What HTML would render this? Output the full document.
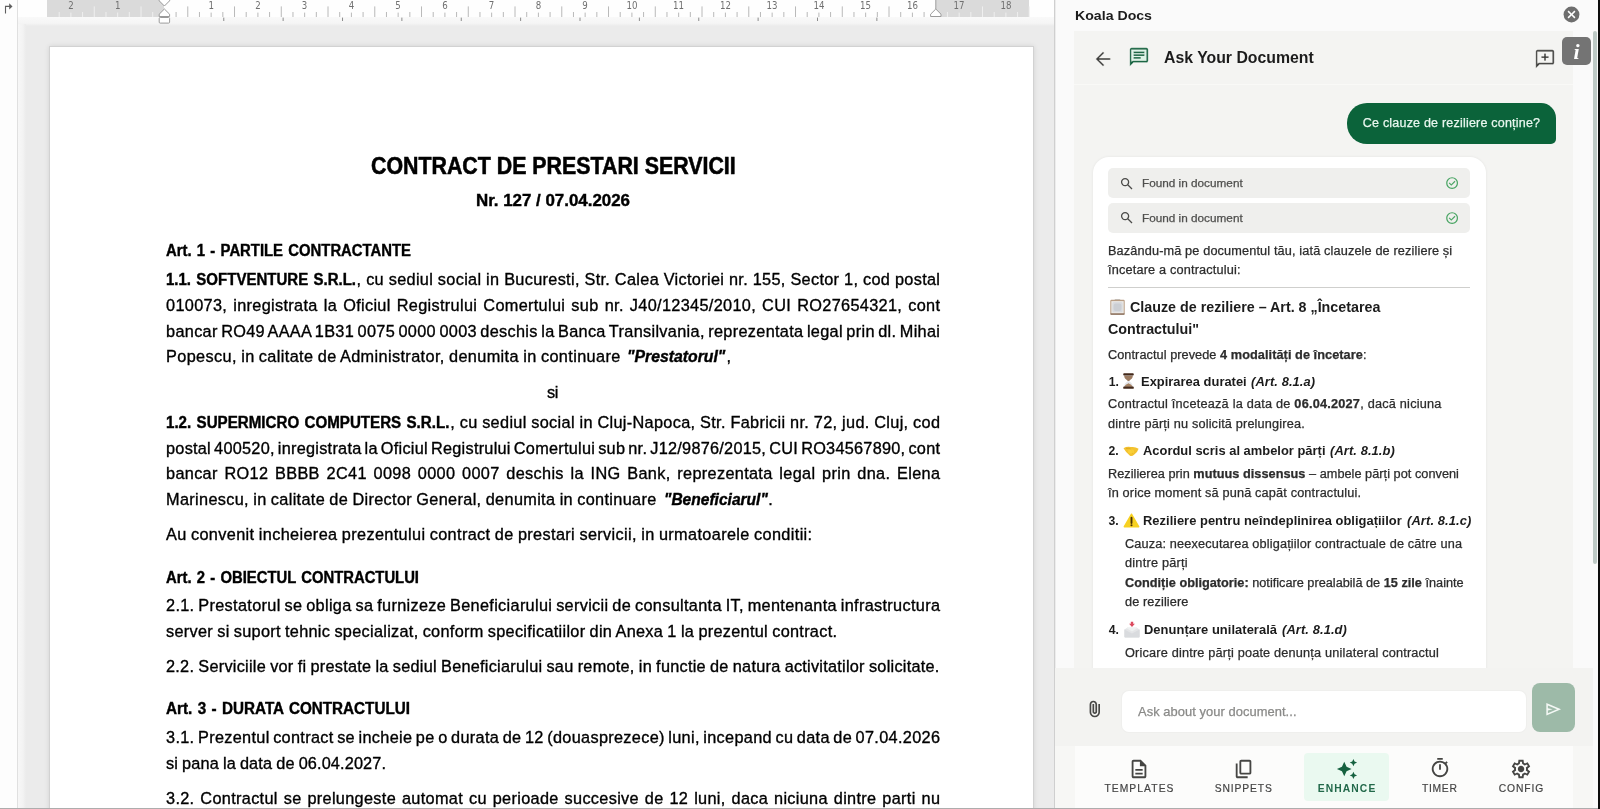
<!DOCTYPE html>
<html lang="ro"><head><meta charset="utf-8"><title>Koala Docs</title>
<style>
html,body{margin:0;padding:0}
body{width:1600px;height:809px;overflow:hidden;position:relative;background:#ebebeb;font-family:"Liberation Sans",Arial,Helvetica,sans-serif;color:#000}
.a{position:absolute}
.t{position:absolute;white-space:nowrap;color:#000}
#root{position:absolute;left:0;top:0;width:1600px;height:809px;will-change:transform}
svg{display:block;position:absolute}
b{font-weight:700}
</style></head><body><div id="root">
<!-- document area -->
<div class="a" style="left:0;top:0;width:1055px;height:809px;background:#ebebeb"></div>
<div class="a" style="left:18px;top:17px;width:1036px;height:9px;background:linear-gradient(#f9f9f9,#f5f5f5 70%,#ebebeb)"></div>
<div class="a" style="left:18px;top:24px;width:8px;height:785px;background:linear-gradient(90deg,#f7f7f7,#f3f3f3 60%,#ebebeb)"></div>
<div class="a" style="left:49.2px;top:46px;width:984.9px;height:780px;background:#fff;border:1px solid #d2d2d2;box-sizing:border-box;box-shadow:0 0 5px rgba(0,0,0,.10)"></div>
<div class="a" style="left:0;top:0;width:17px;height:809px;background:#fdfdfd;border-right:1px solid #e0e0e0"></div>
<div class="a" style="left:18px;top:0;width:1036px;height:17px;background:#fefefe"></div>
<div class="a" style="left:47.3px;top:0;width:117.1px;height:17px;background:#dadada"></div>
<div class="a" style="left:935.8px;top:0;width:93.5px;height:17px;background:#dadada"></div>
<svg width="1055" height="26" viewBox="0 0 1055 26" style="left:0;top:0" font-family="DejaVu Sans Condensed, DejaVu Sans, Liberation Sans, sans-serif" font-size="9.6" fill="#707070">
<path d="M5.500 13.400V6.400h5" fill="none" stroke="#5e5e5e" stroke-width="1.1"/><path d="M9.2 3.300l3.300 3.100-3.300 3.100z" fill="#5e5e5e"/>
<path d="M176.09 12.0V17M187.78 6.4V17M199.46 12.0V17M211.15 12.6V17M222.84 12.0V17M234.53 6.4V17M246.21 12.0V17M257.90 12.6V17M269.59 12.0V17M281.27 6.4V17M292.96 12.0V17M304.65 12.6V17M316.34 12.0V17M328.02 6.4V17M339.71 12.0V17M351.40 12.6V17M363.09 12.0V17M374.77 6.4V17M386.46 12.0V17M398.15 12.6V17M409.84 12.0V17M421.52 6.4V17M433.21 12.0V17M444.90 12.6V17M456.59 12.0V17M468.27 6.4V17M479.96 12.0V17M491.65 12.6V17M503.34 12.0V17M515.02 6.4V17M526.71 12.0V17M538.40 12.6V17M550.09 12.0V17M561.77 6.4V17M573.46 12.0V17M585.15 12.6V17M596.84 12.0V17M608.52 6.4V17M620.21 12.0V17M631.90 12.6V17M643.59 12.0V17M655.27 6.4V17M666.96 12.0V17M678.65 12.6V17M690.34 12.0V17M702.02 6.4V17M713.71 12.0V17M725.40 12.6V17M737.09 12.0V17M748.77 6.4V17M760.46 12.0V17M772.15 12.6V17M783.84 12.0V17M795.52 6.4V17M807.21 12.0V17M818.90 12.6V17M830.59 12.0V17M842.27 6.4V17M853.96 12.0V17M865.65 12.6V17M877.34 12.0V17M889.02 6.4V17M900.71 12.0V17M912.40 12.6V17M924.09 12.0V17" stroke="#b9b9b9" stroke-width="1" fill="none"/>
<path d="M59.21 12.0V17M70.90 12.6V17M82.59 12.0V17M94.28 6.4V17M105.96 12.0V17M117.65 12.6V17M129.34 12.0V17M141.03 6.4V17M152.71 12.0V17M947.46 12.0V17M959.15 12.6V17M970.84 12.0V17M982.52 6.4V17M994.21 12.0V17M1005.90 12.6V17M1017.59 12.0V17M1029.28 6.4V17" stroke="#efefef" stroke-width="1" fill="none"/>
<path d="M223.77 17.6V21M283.14 17.6V21M342.52 17.6V21M401.89 17.6V21M461.26 17.6V21M520.63 17.6V21M580.01 17.6V21M639.38 17.6V21M698.75 17.6V21M758.12 17.6V21M817.50 17.6V21M876.87 17.6V21" stroke="#8c8c8c" stroke-width="1" fill="none"/>
<text x="70.9" y="9.2" text-anchor="middle">2</text><text x="117.7" y="9.2" text-anchor="middle">1</text><text x="211.2" y="9.2" text-anchor="middle">1</text><text x="257.9" y="9.2" text-anchor="middle">2</text><text x="304.6" y="9.2" text-anchor="middle">3</text><text x="351.4" y="9.2" text-anchor="middle">4</text><text x="398.1" y="9.2" text-anchor="middle">5</text><text x="444.9" y="9.2" text-anchor="middle">6</text><text x="491.6" y="9.2" text-anchor="middle">7</text><text x="538.4" y="9.2" text-anchor="middle">8</text><text x="585.1" y="9.2" text-anchor="middle">9</text><text x="631.9" y="9.2" text-anchor="middle">10</text><text x="678.6" y="9.2" text-anchor="middle">11</text><text x="725.4" y="9.2" text-anchor="middle">12</text><text x="772.1" y="9.2" text-anchor="middle">13</text><text x="818.9" y="9.2" text-anchor="middle">14</text><text x="865.6" y="9.2" text-anchor="middle">15</text><text x="912.4" y="9.2" text-anchor="middle">16</text><text x="959.1" y="9.2" text-anchor="middle">17</text><text x="1005.9" y="9.2" text-anchor="middle">18</text>
<path d="M159.2 -1.5h10.4v2.3l-5.2 5.2l-5.2 -5.2z" fill="#fff" stroke="#9a9a9a" stroke-width="1"/>
<path d="M159.2 16.5v-2.3l5.2 -5.2l5.2 5.2v2.3z" fill="#fff" stroke="#9a9a9a" stroke-width="1"/>
<rect x="159.2" y="17.5" width="10.4" height="5.6" rx="1" fill="#fff" stroke="#9a9a9a" stroke-width="1"/>
<path d="M935.8 0V9" stroke="#9a9a9a" stroke-width="1" fill="none"/>
<path d="M930.6 16.5v-2.3l5.2 -5.2l5.2 5.2v2.3z" fill="#fff" stroke="#9a9a9a" stroke-width="1"/>
</svg>
<!-- document text -->
<div class="t" style="left:371.30px;top:152.30px;font-size:23.6px;line-height:28px;font-weight:700;transform:scaleX(0.9052);transform-origin:0 50%;-webkit-text-stroke:0.55px;"><span id="d_title">CONTRACT DE PRESTARI SERVICII</span></div>
<div class="t" style="left:476.00px;top:189.80px;font-size:16.0px;line-height:22px;font-weight:700;transform:scaleX(1.0554);transform-origin:0 50%;-webkit-text-stroke:0.4px;"><span id="d_nr">Nr. 127 / 07.04.2026</span></div>
<div class="t" style="left:166.00px;top:239.80px;font-size:15.8px;line-height:22px;font-weight:700;word-spacing:1.200px;transform:scaleX(0.9406);transform-origin:0 50%;-webkit-text-stroke:0.4px;"><span id="d_a1">Art. 1 - PARTILE CONTRACTANTE</span></div>
<div class="t" style="left:166.00px;top:268.80px;font-size:15.8px;line-height:22px;font-weight:700;word-spacing:1.200px;transform:scaleX(0.9505);transform-origin:0 50%;-webkit-text-stroke:0.4px;"><span id="d_11a0">1.1. SOFTVENTURE S.R.L.</span></div>
<div class="t" style="left:356.60px;top:268.30px;font-size:16.3px;line-height:22px;letter-spacing:0.322px;word-spacing:-0.143px;-webkit-text-stroke:0.34px;"><span id="d_11a">, cu sediul social in Bucuresti, Str. Calea Victoriei nr. 155, Sector 1, cod postal</span></div>
<div class="t" style="left:166.00px;top:294.30px;font-size:16.3px;line-height:22px;letter-spacing:0.322px;word-spacing:1.261px;-webkit-text-stroke:0.34px;"><span id="d_11b">010073, inregistrata la Oficiul Registrului Comertului sub nr. J40/12345/2010, CUI RO27654321, cont</span></div>
<div class="t" style="left:166.00px;top:320.30px;font-size:16.3px;line-height:22px;letter-spacing:0.322px;word-spacing:-1.414px;-webkit-text-stroke:0.34px;"><span id="d_11c">bancar RO49 AAAA 1B31 0075 0000 0003 deschis la Banca Transilvania, reprezentata legal prin dl. Mihai</span></div>
<div class="t" style="left:166.00px;top:345.30px;font-size:16.3px;line-height:22px;letter-spacing:0.371px;word-spacing:-0.600px;-webkit-text-stroke:0.34px;"><span id="d_11d">Popescu, in calitate de Administrator, denumita in continuare</span></div>
<div class="t" style="left:627.40px;top:345.80px;font-size:15.8px;line-height:22px;font-weight:700;transform:scaleX(0.9991);transform-origin:0 50%;-webkit-text-stroke:0.4px;"><span id="d_11d1"><i>"Prestatorul"</i></span></div>
<div class="t" style="left:726.60px;top:345.30px;font-size:16.3px;line-height:22px;-webkit-text-stroke:0.34px;"><span id="d_11d2">,</span></div>
<div class="t" style="left:547.00px;top:381.30px;font-size:16.3px;line-height:22px;letter-spacing:-0.470px;-webkit-text-stroke:0.34px;"><span id="d_si">si</span></div>
<div class="t" style="left:166.00px;top:411.80px;font-size:15.8px;line-height:22px;font-weight:700;word-spacing:1.200px;transform:scaleX(0.9578);transform-origin:0 50%;-webkit-text-stroke:0.4px;"><span id="d_12a0">1.2. SUPERMICRO COMPUTERS S.R.L.</span></div>
<div class="t" style="left:450.20px;top:411.30px;font-size:16.3px;line-height:22px;letter-spacing:0.322px;word-spacing:-0.201px;-webkit-text-stroke:0.34px;"><span id="d_12a">, cu sediul social in Cluj-Napoca, Str. Fabricii nr. 72, jud. Cluj, cod</span></div>
<div class="t" style="left:166.00px;top:437.30px;font-size:16.3px;line-height:22px;letter-spacing:0.259px;word-spacing:-1.700px;-webkit-text-stroke:0.34px;"><span id="d_12b">postal 400520, inregistrata la Oficiul Registrului Comertului sub nr. J12/9876/2015, CUI RO34567890, cont</span></div>
<div class="t" style="left:166.00px;top:462.30px;font-size:16.3px;line-height:22px;letter-spacing:0.322px;word-spacing:1.916px;-webkit-text-stroke:0.34px;"><span id="d_12c">bancar RO12 BBBB 2C41 0098 0000 0007 deschis la ING Bank, reprezentata legal prin dna. Elena</span></div>
<div class="t" style="left:166.00px;top:488.30px;font-size:16.3px;line-height:22px;letter-spacing:0.335px;word-spacing:-0.600px;-webkit-text-stroke:0.34px;"><span id="d_12d">Marinescu, in calitate de Director General, denumita in continuare</span></div>
<div class="t" style="left:663.70px;top:488.80px;font-size:15.8px;line-height:22px;font-weight:700;transform:scaleX(0.9847);transform-origin:0 50%;-webkit-text-stroke:0.4px;"><span id="d_12d1"><i>"Beneficiarul"</i></span></div>
<div class="t" style="left:768.30px;top:488.30px;font-size:16.3px;line-height:22px;-webkit-text-stroke:0.34px;"><span id="d_12d2">.</span></div>
<div class="t" style="left:166.00px;top:523.30px;font-size:16.3px;line-height:22px;letter-spacing:0.362px;word-spacing:-0.600px;-webkit-text-stroke:0.34px;"><span id="d_au">Au convenit incheierea prezentului contract de prestari servicii, in urmatoarele conditii:</span></div>
<div class="t" style="left:166.00px;top:566.80px;font-size:15.8px;line-height:22px;font-weight:700;word-spacing:1.200px;transform:scaleX(0.9386);transform-origin:0 50%;-webkit-text-stroke:0.4px;"><span id="d_a2">Art. 2 - OBIECTUL CONTRACTULUI</span></div>
<div class="t" style="left:166.00px;top:594.30px;font-size:16.3px;line-height:22px;letter-spacing:0.322px;word-spacing:-0.968px;-webkit-text-stroke:0.34px;"><span id="d_21a">2.1. Prestatorul se obliga sa furnizeze Beneficiarului servicii de consultanta IT, mentenanta infrastructura</span></div>
<div class="t" style="left:166.00px;top:620.30px;font-size:16.3px;line-height:22px;letter-spacing:0.293px;word-spacing:-0.600px;-webkit-text-stroke:0.34px;"><span id="d_21b">server si suport tehnic specializat, conform specificatiilor din Anexa 1 la prezentul contract.</span></div>
<div class="t" style="left:166.00px;top:655.30px;font-size:16.3px;line-height:22px;letter-spacing:0.250px;word-spacing:-0.600px;-webkit-text-stroke:0.34px;"><span id="d_22">2.2. Serviciile vor fi prestate la sediul Beneficiarului sau remote, in functie de natura activitatilor solicitate.</span></div>
<div class="t" style="left:166.00px;top:697.80px;font-size:15.8px;line-height:22px;font-weight:700;word-spacing:1.200px;transform:scaleX(0.9650);transform-origin:0 50%;-webkit-text-stroke:0.4px;"><span id="d_a3">Art. 3 - DURATA CONTRACTULUI</span></div>
<div class="t" style="left:166.00px;top:726.30px;font-size:16.3px;line-height:22px;letter-spacing:0.322px;word-spacing:-1.333px;-webkit-text-stroke:0.34px;"><span id="d_31a">3.1. Prezentul contract se incheie pe o durata de 12 (douasprezece) luni, incepand cu data de 07.04.2026</span></div>
<div class="t" style="left:166.00px;top:752.30px;font-size:16.3px;line-height:22px;letter-spacing:0.135px;word-spacing:-0.600px;-webkit-text-stroke:0.34px;"><span id="d_31b">si pana la data de 06.04.2027.</span></div>
<div class="t" style="left:166.00px;top:787.30px;font-size:16.3px;line-height:22px;letter-spacing:0.322px;word-spacing:1.060px;-webkit-text-stroke:0.34px;"><span id="d_32">3.2. Contractul se prelungeste automat cu perioade succesive de 12 luni, daca niciuna dintre parti nu</span></div>
<!-- side panel -->
<div class="a" style="left:1054px;top:0;width:546px;height:809px;background:#fafafa;border-left:1px solid #cfcfcf;box-sizing:border-box;box-shadow:inset 1px 0 0 #ececec"></div>
<div class="a" style="left:1074px;top:30.5px;width:499px;height:640px;background:#f4f4f2"></div>
<div class="a" style="left:1074px;top:84px;width:499px;height:1px;background:#f9f9f7"></div>
<!-- header icons -->
<svg width="19" height="19" viewBox="0 -960 960 960" style="left:1562.3px;top:5.1px"><circle cx="480" cy="-480" r="400" fill="#6e6e6e"/><path d="m336-280 144-144 144 144 56-56-144-144 144-144-56-56-144 144-144-144-56 56 144 144-144 144 56 56Z" fill="#fff"/></svg>
<svg width="22" height="22" viewBox="0 -960 960 960" style="left:1092.3px;top:48.1px"><path fill="#3f3f3d" stroke="#f4f4f2" stroke-width="18" d="m313-440 224 224-57 56-320-320 320-320 57 56-224 224h487v80H313Z"/></svg>
<svg width="22" height="22" viewBox="0 -960 960 960" style="left:1127.9px;top:45.9px"><path d="M160-800h640v480H206l-46 45Z" fill="#dcf3e6"/><path fill="#105f3b" stroke="#f4f4f2" stroke-width="14" d="M240-400h320v-80H240v80Zm0-120h480v-80H240v80Zm0-120h480v-80H240v80ZM80-80v-720q0-33 23.500-56.500T160-880h640q33 0 56.500 23.500T880-800v480q0 33-23.500 56.500T800-240H240L80-80Zm126-240h594v-480H160v525l46-45Zm-46 0v-480 480Z"/></svg>
<svg width="22" height="22" viewBox="0 -960 960 960" style="left:1533.6px;top:47.9px"><path fill="#3f3f3d" stroke="#f4f4f2" stroke-width="14" d="M440-400h80v-120h120v-80H520v-120h-80v120H320v80h120v120ZM80-80v-720q0-33 23.500-56.500T160-880h640q33 0 56.500 23.500T880-800v480q0 33-23.500 56.500T800-240H240L80-80Zm126-240h594v-480H160v525l46-45Zm-46 0v-480 480Z"/></svg>
<div class="a" style="left:1561.8px;top:36.8px;width:29.1px;height:28.7px;background:#747474;border-radius:5px"></div>
<div class="t" style="left:1573.6px;top:40px;font-family:'Liberation Serif','DejaVu Serif',serif;font-style:italic;font-weight:700;font-size:22px;line-height:24px;color:#fff">i</div>
<!-- user bubble -->
<div class="a" style="left:1347.2px;top:102.5px;width:208.8px;height:41.2px;background:#0b633a;border-radius:20px 15px 5px 20px"></div>
<!-- assistant card -->
<div class="a" style="left:1092.5px;top:157px;width:393.5px;height:530px;background:#fff;border-radius:16px 16px 0 0;box-shadow:0 0 3px rgba(0,0,0,.07)"></div>
<div class="a" style="left:1108px;top:168.4px;width:362.4px;height:29.6px;background:#efefed;border-radius:5px"></div>
<div class="a" style="left:1108px;top:203.2px;width:362.4px;height:29.6px;background:#efefed;border-radius:5px"></div>
<svg width="15.4" height="15.4" viewBox="0 -960 960 960" style="left:1118.9px;top:175.6px"><path fill="#4a4a48" d="M784-120 532-372q-30 24-69 38t-83 14q-109 0-184.500-75.500T120-580q0-109 75.500-184.500T380-840q109 0 184.500 75.500T640-580q0 44-14 83t-38 69l252 252-56 56ZM380-400q75 0 127.500-52.500T560-580q0-75-52.500-127.500T380-760q-75 0-127.500 52.500T200-580q0 75 52.500 127.500T380-400Z"/></svg>
<svg width="15.4" height="15.4" viewBox="0 -960 960 960" style="left:1118.9px;top:210.4px"><path fill="#4a4a48" d="M784-120 532-372q-30 24-69 38t-83 14q-109 0-184.500-75.500T120-580q0-109 75.500-184.500T380-840q109 0 184.500 75.500T640-580q0 44-14 83t-38 69l252 252-56 56ZM380-400q75 0 127.500-52.500T560-580q0-75-52.500-127.500T380-760q-75 0-127.500 52.500T200-580q0 75 52.500 127.500T380-400Z"/></svg>
<svg width="14.2" height="14.2" viewBox="0 -960 960 960" style="left:1445.4px;top:176.1px"><path fill="#4aa564" d="m424-296 282-282-56-56-226 226-114-114-56 56 170 170Zm56 216q-83 0-156-31.500T197-197q-54-54-85.500-127T80-480q0-83 31.500-156T197-763q54-54 127-85.500T480-880q83 0 156 31.500T763-763q54 54 85.500 127T880-480q0 83-31.500 156T763-197q-54 54-127 85.500T480-80Zm0-80q134 0 227-93t93-227q0-134-93-227t-227-93q-134 0-227 93t-93 227q0 134 93 227t227 93Z"/></svg>
<svg width="14.2" height="14.2" viewBox="0 -960 960 960" style="left:1445.4px;top:210.9px"><path fill="#4aa564" d="m424-296 282-282-56-56-226 226-114-114-56 56 170 170Zm56 216q-83 0-156-31.500T197-197q-54-54-85.500-127T80-480q0-83 31.500-156T197-763q54-54 127-85.500T480-880q83 0 156 31.500T763-763q54 54 85.500 127T880-480q0 83-31.500 156T763-197q-54 54-127 85.500T480-80Zm0-80q134 0 227-93t93-227q0-134-93-227t-227-93q-134 0-227 93t-93 227q0 134 93 227t227 93Z"/></svg>
<div class="a" style="left:1108px;top:287.2px;width:362.4px;height:1px;background:#cfcfcd"></div>
<!-- emoji-like pictograms -->
<svg width="15" height="16" viewBox="0 0 15 16" style="left:1109.7px;top:299.2px"><rect x="4.600" y="0.100" width="5.800" height="2" rx="0.900" fill="#c9c7c4"/><rect x="0.300" y="0.800" width="14.400" height="14.900" rx="1.100" fill="#b89d84"/><rect x="0.300" y="14.200" width="14.400" height="1.500" rx="0.700" fill="#8a7260"/><rect x="1.300" y="2.100" width="12.400" height="12.100" fill="#eceae7"/><rect x="2.300" y="3.100" width="10.400" height="10.100" rx="1.500" fill="#d9dbdf"/><rect x="3.600" y="4.400" width="7.800" height="7.500" rx="2" fill="#cbced3"/></svg>
<svg width="11" height="16" viewBox="0 0 11 16" style="left:1123.2px;top:373.4px"><path d="M4.800 8h1.400c1 1.100 3.600 2.300 3.600 5.700H1.200c0-3.400 2.600-4.600 3.600-5.700Z" fill="#e4e6ea"/><path d="M1.200 2.800h8.600c0 2.900-2.600 4.100-3.600 5.200H4.800c-1-1.100-3.600-2.300-3.600-5.200Z" fill="#9c7b61"/><path d="M1.500 13.800c.6-2.100 2.500-2.700 4-3.600 1.500.9 3.400 1.500 4 3.600Z" fill="#a68363"/><rect x="0.200" y="0.300" width="10.600" height="2.200" rx=".9" fill="#43291a"/><rect x="0.200" y="13.600" width="10.600" height="2.200" rx=".9" fill="#43291a"/></svg>
<svg width="16" height="11" viewBox="0 0 16 11" style="left:1123.1px;top:446.3px"><path d="M0.500 2.300Q3.800.300 7.800 1.100 12 .400 15.600 2.700 14.700 6 11.300 8.500 8.800 10.900 7 9.700 3 6.800.5 2.300Z" fill="#f3c22f"/><path d="M3 2.400Q6 1.800 8 3.400 10 5.600 9.400 8" fill="none" stroke="#dba51f" stroke-width=".8"/><ellipse cx="8" cy="5.400" rx="3" ry="2.200" fill="#fbd33a" opacity=".8"/></svg>
<svg width="17" height="15" viewBox="0 0 17 15" style="left:1122.8px;top:512.7px"><path d="M8.500 1.300 15.600 13.700H1.400Z" fill="#f7d122" stroke="#f7d122" stroke-width="1.600" stroke-linejoin="round"/><path d="M8.500 4.700v5.400" stroke="#4a3206" stroke-width="1.900" stroke-linecap="round"/><circle cx="8.500" cy="12.300" r="1.050" fill="#4a3206"/></svg>
<svg width="16" height="17" viewBox="0 0 16 17" style="left:1123.500px;top:621px"><path d="M0.400 8.400 3 7h10l2.600 1.400v7.400c0 .5-.3.800-.8.800H1.200c-.5 0-.8-.3-.8-.8Z" fill="#e4e5e7"/><path d="M0.400 8.600 8 12.600l7.600-4v7.200c0 .5-.3.800-.8.800H1.200c-.5 0-.8-.3-.8-.8Z" fill="#d9dbde"/><path d="M3 7.400 8 10.600 13 7.400V6.200H3Z" fill="#eef1f1"/><path d="M6.800.7h2.400v2.100h1.700L8 6.100 5.100 2.800h1.700Z" fill="#dc4a5e"/></svg>
<!-- input area -->
<div class="a" style="left:1055px;top:668px;width:538px;height:78px;background:#f3f3f1"></div>
<div class="a" style="left:1055px;top:746px;width:538px;height:63px;background:#f7f7f5"></div>
<div class="a" style="left:1074.5px;top:745.6px;width:498.5px;height:63px;background:#fcfcfb"></div>
<svg width="20" height="20" viewBox="0 -960 960 960" style="left:1084.7px;top:699.2px"><path fill="#474745" d="M720-330q0 104-73 177T470-80q-104 0-177-73t-73-177v-370q0-75 52.500-127.500T400-880q75 0 127.500 52.500T580-700v350q0 46-32 78t-78 32q-46 0-78-32t-32-78v-370h80v370q0 13 8.500 21.500T470-320q13 0 21.500-8.500T500-350v-350q-1-42-29.500-71T400-800q-42 0-71 29t-29 71v370q-1 71 49 120.500T470-160q70 0 119-49.500T640-330v-390h80v390Z"/></svg>
<div class="a" style="left:1122px;top:691px;width:403.600px;height:40.700px;background:#fff;border-radius:7px;box-shadow:0 0 0 1px #efefed"></div>
<div class="a" style="left:1532.300px;top:683px;width:42.600px;height:49px;background:#9dbaa8;border-radius:8px"></div>
<svg width="18.6" height="18.6" viewBox="0 -960 960 960" style="left:1543.900px;top:699.700px"><path fill="#f4f8f5" d="M120-160v-640l760 320-760 320Zm80-120 474-200-474-200v140l240 60-240 60v140Zm0 0v-400 400Z"/></svg>
<!-- bottom nav -->
<div class="a" style="left:1304px;top:752.800px;width:85.300px;height:47.800px;background:#eaf9f0;border-radius:4px"></div>
<svg width="22" height="22" viewBox="0 -960 960 960" style="left:1127.600px;top:757.700px"><path fill="#454543" d="M320-240h320v-80H320v80Zm0-160h320v-80H320v80ZM240-80q-33 0-56.500-23.500T160-160v-640q0-33 23.500-56.500T240-880h320l240 240v480q0 33-23.500 56.500T720-80H240Zm280-520v-200H240v640h480v-440H520ZM240-800v200-200 640-640Z"/></svg>
<svg width="22" height="22" viewBox="0 -960 960 960" style="left:1232.500px;top:757.600px"><path fill="#454543" d="M360-240q-33 0-56.500-23.500T280-320v-480q0-33 23.500-56.500T360-880h360q33 0 56.500 23.500T800-800v480q0 33-23.500 56.500T720-240H360Zm0-80h360v-480H360v480ZM200-80q-33 0-56.500-23.500T120-160v-560h80v560h440v80H200Zm160-240v-480 480Z"/></svg>
<svg width="22" height="22" viewBox="0 -960 960 960" style="left:1336.100px;top:757.500px"><path fill="#15613f" d="m760-600-50-110-110-50 110-50 50-110 50 110 110 50-110 50-50 110Zm0 560-50-110-110-50 110-50 50-110 50 110 110 50-110 50-50 110ZM360-160 260-380 40-480l220-100 100-220 100 220 220 100-220 100-100 220Z"/></svg>
<svg width="22" height="22" viewBox="0 -960 960 960" style="left:1428.500px;top:757.400px"><path fill="#454543" d="M360-840v-80h240v80H360Zm80 440h80v-240h-80v240Zm40 320q-74 0-139.500-28.500T226-186q-49-49-77.500-114.500T120-440q0-74 28.500-139.500T226-694q49-49 114.500-77.500T480-800q62 0 119 20t107 58l56-56 56 56-56 56q38 50 58 107t20 119q0 74-28.500 139.500T734-186q-49 49-114.500 77.500T480-80Zm0-80q116 0 198-82t82-198q0-116-82-198t-198-82q-116 0-198 82t-82 198q0 116 82 198t198 82Zm0-280Z"/></svg>
<svg width="22" height="22" viewBox="0 -960 960 960" style="left:1510.200px;top:757.600px"><path fill="#454543" d="m370-80-16-128q-13-5-24.500-12T307-235l-119 50L78-375l103-78q-1-7-1-13.500v-27q0-6.500 1-13.500L78-585l110-190 119 50q11-8 23-15t24-12l16-128h220l16 128q13 5 24.500 12t22.500 15l119-50 110 190-103 78q1 7 1 13.500v27q0 6.500-2 13.500l103 78-110 190-118-50q-11 8-23 15t-24 12L590-80H370Zm70-80h79l14-106q31-8 57.500-23.500T639-327l99 41 39-68-86-65q5-14 7-29.500t2-31.500q0-16-2-31.500t-7-29.500l86-65-39-68-99 42q-22-23-48.500-38.500T533-694l-13-106h-79l-14 106q-31 8-57.500 23.500T321-633l-99-41-39 68 86 64q-5 15-7 30t-2 32q0 16 2 31t7 30l-86 65 39 68 99-42q22 23 48.500 38.500T427-266l13 106Zm42-180q58 0 99-41t41-99q0-58-41-99t-99-41q-59 0-99.500 41T342-480q0 58 40.500 99t99.500 41Zm-2-140Z"/></svg>
<!-- panel text -->
<div class="t" style="left:1074.50px;top:7.80px;font-size:13.6px;line-height:16px;font-weight:700;color:#1c1c1c;transform:scaleX(1.0398);transform-origin:0 50%;"><span id="p_koala">Koala Docs</span></div>
<div class="t" style="left:1164.20px;top:47.80px;font-size:15.8px;line-height:20px;font-weight:700;color:#1c1c1c;transform:scaleX(1.0019);transform-origin:0 50%;"><span id="p_ask">Ask Your Document</span></div>
<div class="t" style="left:1362.80px;top:115.30px;font-size:12.5px;line-height:16px;color:#e9f7ef;letter-spacing:0.209px;-webkit-text-stroke:0.25px;"><span id="p_user">Ce clauze de reziliere conține?</span></div>
<div class="t" style="left:1141.50px;top:175.30px;font-size:11.3px;line-height:16px;color:#4f4f4d;transform:scaleX(1.0411);transform-origin:0 50%;-webkit-text-stroke:0.25px;"><span id="p_f1">Found in document</span></div>
<div class="t" style="left:1141.50px;top:210.30px;font-size:11.3px;line-height:16px;color:#4f4f4d;transform:scaleX(1.0411);transform-origin:0 50%;-webkit-text-stroke:0.25px;"><span id="p_f2">Found in document</span></div>
<div class="t" style="left:1108.00px;top:243.30px;font-size:12.0px;line-height:16px;color:#2c2c2c;letter-spacing:0.124px;transform:scaleX(1.0600);transform-origin:0 50%;-webkit-text-stroke:0.25px;"><span id="p_b1">Bazându-mă pe documentul tău, iată clauzele de reziliere și</span></div>
<div class="t" style="left:1108.00px;top:262.30px;font-size:12.0px;line-height:16px;color:#2c2c2c;letter-spacing:0.160px;transform:scaleX(1.0600);transform-origin:0 50%;-webkit-text-stroke:0.25px;"><span id="p_b2">încetare a contractului:</span></div>
<div class="t" style="left:1130.20px;top:299.30px;font-size:13.9px;line-height:16px;font-weight:700;color:#1c1c1c;transform:scaleX(1.0285);transform-origin:0 50%;"><span id="p_h1">Clauze de reziliere – Art. 8 „Încetarea</span></div>
<div class="t" style="left:1108.00px;top:321.30px;font-size:13.9px;line-height:16px;font-weight:700;color:#1c1c1c;transform:scaleX(1.0295);transform-origin:0 50%;"><span id="p_h2">Contractului"</span></div>
<div class="t" style="left:1108.00px;top:347.30px;font-size:12.0px;line-height:16px;color:#2c2c2c;letter-spacing:0.054px;transform:scaleX(1.0600);transform-origin:0 50%;-webkit-text-stroke:0.25px;"><span id="p_c1">Contractul prevede <b>4 modalități de încetare</b>:</span></div>
<div class="t" style="left:1108.75px;top:374.30px;font-size:12.2px;line-height:16px;font-weight:700;color:#1c1c1c;"><span id="p_n1">1.</span></div>
<div class="t" style="left:1140.60px;top:374.30px;font-size:12.2px;line-height:16px;font-weight:700;color:#1c1c1c;letter-spacing:0.009px;transform:scaleX(1.0600);transform-origin:0 50%;"><span id="p_i1">Expirarea duratei</span></div>
<div class="t" style="left:1251.40px;top:374.30px;font-size:12.2px;line-height:16px;font-weight:700;color:#1c1c1c;letter-spacing:0.078px;transform:scaleX(1.0600);transform-origin:0 50%;"><span id="p_i1a"><i>(Art. 8.1.a)</i></span></div>
<div class="t" style="left:1108.00px;top:396.30px;font-size:12.0px;line-height:16px;color:#2c2c2c;letter-spacing:0.199px;transform:scaleX(1.0600);transform-origin:0 50%;-webkit-text-stroke:0.25px;"><span id="p_c2">Contractul încetează la data de <b>06.04.2027</b>, dacă niciuna</span></div>
<div class="t" style="left:1108.00px;top:416.30px;font-size:12.0px;line-height:16px;color:#2c2c2c;letter-spacing:0.152px;transform:scaleX(1.0600);transform-origin:0 50%;-webkit-text-stroke:0.25px;"><span id="p_c3">dintre părți nu solicită prelungirea.</span></div>
<div class="t" style="left:1108.50px;top:443.30px;font-size:12.2px;line-height:16px;font-weight:700;color:#1c1c1c;"><span id="p_n2">2.</span></div>
<div class="t" style="left:1143.10px;top:443.30px;font-size:12.2px;line-height:16px;font-weight:700;color:#1c1c1c;letter-spacing:0.004px;transform:scaleX(1.0600);transform-origin:0 50%;"><span id="p_i2">Acordul scris al ambelor părți</span></div>
<div class="t" style="left:1330.00px;top:443.30px;font-size:12.2px;line-height:16px;font-weight:700;color:#1c1c1c;letter-spacing:0.078px;transform:scaleX(1.0600);transform-origin:0 50%;"><span id="p_i2a"><i>(Art. 8.1.b)</i></span></div>
<div class="t" style="left:1108.00px;top:466.30px;font-size:12.0px;line-height:16px;color:#2c2c2c;letter-spacing:0.027px;transform:scaleX(1.0600);transform-origin:0 50%;-webkit-text-stroke:0.25px;"><span id="p_c4">Rezilierea prin <b>mutuus dissensus</b> – ambele părți pot conveni</span></div>
<div class="t" style="left:1108.00px;top:485.30px;font-size:12.0px;line-height:16px;color:#2c2c2c;letter-spacing:0.140px;transform:scaleX(1.0600);transform-origin:0 50%;-webkit-text-stroke:0.25px;"><span id="p_c5">în orice moment să pună capăt contractului.</span></div>
<div class="t" style="left:1108.60px;top:513.30px;font-size:12.2px;line-height:16px;font-weight:700;color:#1c1c1c;"><span id="p_n3">3.</span></div>
<div class="t" style="left:1143.10px;top:513.30px;font-size:12.2px;line-height:16px;font-weight:700;color:#1c1c1c;letter-spacing:0.024px;transform:scaleX(1.0600);transform-origin:0 50%;"><span id="p_i3">Reziliere pentru neîndeplinirea obligațiilor</span></div>
<div class="t" style="left:1406.60px;top:513.30px;font-size:12.2px;line-height:16px;font-weight:700;color:#1c1c1c;letter-spacing:0.104px;transform:scaleX(1.0600);transform-origin:0 50%;"><span id="p_i3a"><i>(Art. 8.1.c)</i></span></div>
<div class="t" style="left:1125.30px;top:536.30px;font-size:12.0px;line-height:16px;color:#2c2c2c;letter-spacing:0.136px;transform:scaleX(1.0600);transform-origin:0 50%;-webkit-text-stroke:0.25px;"><span id="p_c6">Cauza: neexecutarea obligațiilor contractuale de către una</span></div>
<div class="t" style="left:1125.30px;top:555.30px;font-size:12.0px;line-height:16px;color:#2c2c2c;letter-spacing:0.214px;transform:scaleX(1.0600);transform-origin:0 50%;-webkit-text-stroke:0.25px;"><span id="p_c7">dintre părți</span></div>
<div class="t" style="left:1125.30px;top:575.30px;font-size:12.0px;line-height:16px;color:#2c2c2c;transform:scaleX(1.0600);transform-origin:0 50%;-webkit-text-stroke:0.25px;"><span id="p_c8"><b>Condiție obligatorie:</b> notificare prealabilă de <b>15 zile</b> înainte</span></div>
<div class="t" style="left:1125.30px;top:594.30px;font-size:12.0px;line-height:16px;color:#2c2c2c;letter-spacing:0.101px;transform:scaleX(1.0600);transform-origin:0 50%;-webkit-text-stroke:0.25px;"><span id="p_c9">de reziliere</span></div>
<div class="t" style="left:1108.75px;top:622.30px;font-size:12.2px;line-height:16px;font-weight:700;color:#1c1c1c;"><span id="p_n4">4.</span></div>
<div class="t" style="left:1143.50px;top:622.30px;font-size:12.2px;line-height:16px;font-weight:700;color:#1c1c1c;letter-spacing:0.042px;transform:scaleX(1.0600);transform-origin:0 50%;"><span id="p_i4">Denunțare unilaterală</span></div>
<div class="t" style="left:1281.50px;top:622.30px;font-size:12.2px;line-height:16px;font-weight:700;color:#1c1c1c;letter-spacing:0.087px;transform:scaleX(1.0600);transform-origin:0 50%;"><span id="p_i4a"><i>(Art. 8.1.d)</i></span></div>
<div class="t" style="left:1125.30px;top:645.30px;font-size:12.0px;line-height:16px;color:#2c2c2c;letter-spacing:0.169px;transform:scaleX(1.0600);transform-origin:0 50%;-webkit-text-stroke:0.25px;"><span id="p_c10">Oricare dintre părți poate denunța unilateral contractul</span></div>
<div class="t" style="left:1138.30px;top:704.30px;font-size:12.2px;line-height:16px;color:#8a8a88;letter-spacing:0.046px;transform:scaleX(1.0600);transform-origin:0 50%;-webkit-text-stroke:0.25px;"><span id="p_ph">Ask about your document...</span></div>
<div class="t" style="left:1104.40px;top:780.80px;font-size:10.3px;line-height:16px;color:#444;letter-spacing:1.079px;-webkit-text-stroke:0.18px;"><span id="p_t1">TEMPLATES</span></div>
<div class="t" style="left:1214.75px;top:780.80px;font-size:10.3px;line-height:16px;color:#444;letter-spacing:0.887px;-webkit-text-stroke:0.18px;"><span id="p_t2">SNIPPETS</span></div>
<div class="t" style="left:1317.75px;top:780.80px;font-size:10.3px;line-height:16px;font-weight:700;color:#22694a;letter-spacing:1.097px;"><span id="p_t3">ENHANCE</span></div>
<div class="t" style="left:1421.90px;top:780.80px;font-size:10.3px;line-height:16px;color:#444;letter-spacing:0.738px;-webkit-text-stroke:0.18px;"><span id="p_t4">TIMER</span></div>
<div class="t" style="left:1498.80px;top:780.80px;font-size:10.3px;line-height:16px;color:#444;letter-spacing:0.890px;-webkit-text-stroke:0.18px;"><span id="p_t5">CONFIG</span></div>
<!-- overlays -->
<div class="a" style="left:1592.700px;top:30.500px;width:4px;height:533.500px;background:#bdc9c5;border-radius:2px"></div>
<div class="a" style="left:0;top:807.5px;width:1598px;height:1.5px;background:#adadad"></div>
<div class="a" style="left:1598px;top:0;width:2px;height:809px;background:#0c0c0c"></div>
</div></body></html>
